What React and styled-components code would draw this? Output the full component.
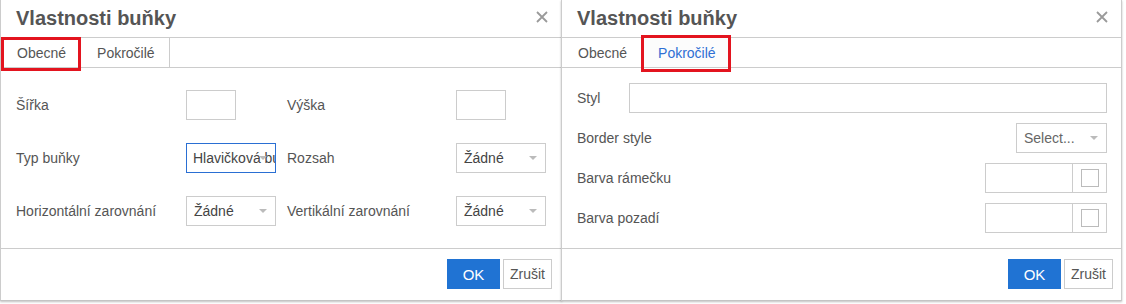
import React from "react";
import styled, { createGlobalStyle } from "styled-components";

const Global = createGlobalStyle`
  html, body { margin: 0; padding: 0; background: #fff; }
  body { font-family: "Liberation Sans", Arial, sans-serif; color: #555; }
  * { box-sizing: border-box; }
`;

const Page = styled.div`
  display: flex;
  width: 1126px;
  height: 304px;
  align-items: flex-start;
`;

const Dialog = styled.div`
  width: ${(p) => p.$w}px;
  margin-left: ${(p) => (p.$overlap ? -1 : 0)}px;
  border-left: 1px solid #ccc;
  border-right: 1px solid #ccc;
  border-bottom: 1px solid #c4c4c4;
  box-shadow: 0 1px 2px rgba(0, 0, 0, 0.25);
  background: #fff;
  display: flex;
  flex-direction: column;
`;

const Header = styled.div`
  height: 38px;
  border-bottom: 1px solid #ccc;
  display: flex;
  align-items: center;
  justify-content: space-between;
  padding: 0 13px 1px 15px;
`;

const Title = styled.h2`
  margin: 0;
  font-size: 20px;
  font-weight: bold;
  color: #555;
  line-height: 37px;
`;

const Close = styled.button`
  border: 0;
  background: none;
  padding: 0;
  width: 12px;
  height: 12px;
  display: flex;
  cursor: pointer;
  margin-top: -2px;
`;

const TabBar = styled.div`
  height: 30px;
  border-bottom: 1px solid #ccc;
  display: flex;
`;

const Tab = styled.div`
  position: relative;
  height: 29px;
  padding: 0 14px 0 16px;
  display: flex;
  align-items: center;
  font-size: 14px;
  color: ${(p) => (p.$active ? "#2f6fd4" : "#555")};
  background: ${(p) => (p.$active ? "#fcfcfc" : "#fff")};
  border-right: 1px solid ${(p) => (p.$bordered ? "#ccc" : "transparent")};
`;

const Mark = styled.span`
  position: absolute;
  left: ${(p) => p.$l}px;
  top: ${(p) => p.$t}px;
  right: ${(p) => p.$r}px;
  bottom: ${(p) => p.$b}px;
  border: 3px solid #e3141f;
  pointer-events: none;
`;

const Body = styled.div`
  height: 181px;
  border-bottom: 1px solid #ccc;
`;

const Grid = styled.div`
  display: grid;
  grid-template-columns: 170px 101px 169px 90px;
  grid-auto-rows: 30px;
  row-gap: 23px;
  align-items: center;
  padding: 22px 0 0 15px;
`;

const Label = styled.label`
  font-size: 14px;
  color: #555;
  width: ${(p) => (p.$w ? `${p.$w}px` : "auto")};
  flex: none;
`;

const TextBox = styled.div`
  width: ${(p) => (p.$w ? `${p.$w}px` : "auto")};
  flex: ${(p) => (p.$grow ? 1 : "none")};
  height: 30px;
  border: 1px solid #ccc;
  background: #fff;
`;

const SelectBox = styled.div`
  position: relative;
  width: ${(p) => p.$w}px;
  height: 30px;
  border: 1px solid ${(p) => (p.$focus ? "#2a6fd3" : "#ccc")};
  background: #fff;
  padding: 0 0 0 ${(p) => (p.$focus ? 6 : 7)}px;
  font-size: 14px;
  color: ${(p) => (p.$muted ? "#666" : "#444")};
  line-height: 28px;
  white-space: nowrap;
  overflow: hidden;
  &::after {
    content: "";
    position: absolute;
    right: 8px;
    top: 12px;
    border-left: 4px solid transparent;
    border-right: 4px solid transparent;
    border-top: 4px solid #bbb;
  }
`;

const Rows = styled.div`
  display: flex;
  flex-direction: column;
  gap: 10px;
  padding: 15px 14px 0 15px;
`;

const Row = styled.div`
  display: flex;
  align-items: center;
  justify-content: space-between;
  height: 30px;
`;

const ColorBox = styled.div`
  width: 122px;
  height: 30px;
  border: 1px solid #ccc;
  display: flex;
`;

const ColorValue = styled.div`
  flex: 1;
  border-right: 1px solid #ccc;
`;

const ColorSwatch = styled.div`
  width: 33px;
  display: flex;
  align-items: center;
  justify-content: center;
  &::before {
    content: "";
    width: 16px;
    height: 16px;
    border: 1px solid #bbb;
  }
`;

const Footer = styled.div`
  height: 51px;
  display: flex;
  justify-content: flex-end;
  align-items: flex-start;
  gap: 3px;
  padding: 10px ${(p) => p.$pr}px 0 0;
`;

const Button = styled.button`
  height: 30px;
  width: ${(p) => p.$w}px;
  font-family: "Liberation Sans", Arial, sans-serif;
  font-size: ${(p) => (p.$primary ? 15 : 14)}px;
  color: ${(p) => (p.$primary ? "#fff" : "#555")};
  background: ${(p) => (p.$primary ? "#2073d3" : "#fff")};
  border: 1px solid ${(p) => (p.$primary ? "#2073d3" : "#ccc")};
  padding: 0;
  cursor: pointer;
`;

const CloseIcon = () => (
  <svg width="12" height="12" viewBox="0 0 12 12">
    <path d="M1 1 L11 11 M11 1 L1 11" stroke="#9a9a9a" strokeWidth="1.8" fill="none" />
  </svg>
);

const DialogHeader = () => (
  <Header>
    <Title>Vlastnosti buňky</Title>
    <Close aria-label="close">
      <CloseIcon />
    </Close>
  </Header>
);

const Actions = ({ pr }) => (
  <Footer $pr={pr}>
    <Button $primary $w={53}>OK</Button>
    <Button $w={49}>Zrušit</Button>
  </Footer>
);

export default function App() {
  return (
    <>
      <Global />
      <Page>
        <Dialog $w={562}>
          <DialogHeader />
          <TabBar>
            <Tab $bordered>
              Obecné
              <Mark $l={0} $t={-1} $r={-1} $b={-4} />
            </Tab>
            <Tab $bordered>Pokročilé</Tab>
          </TabBar>
          <Body>
            <Grid>
              <Label>Šířka</Label>
              <TextBox $w={50} />
              <Label>Výška</Label>
              <TextBox $w={50} />

              <Label>Typ buňky</Label>
              <SelectBox $w={90} $focus>Hlavičková buňka</SelectBox>
              <Label>Rozsah</Label>
              <SelectBox $w={90}>Žádné</SelectBox>

              <Label>Horizontální zarovnání</Label>
              <SelectBox $w={90}>Žádné</SelectBox>
              <Label>Vertikální zarovnání</Label>
              <SelectBox $w={90}>Žádné</SelectBox>
            </Grid>
          </Body>
          <Actions pr={9} />
        </Dialog>

        <Dialog $w={561} $overlap>
          <DialogHeader />
          <TabBar>
            <Tab>Obecné</Tab>
            <Tab $active>
              Pokročilé
              <Mark $l={-1} $t={-3} $r={-1} $b={-5} />
            </Tab>
          </TabBar>
          <Body>
            <Rows>
              <Row>
                <Label $w={52}>Styl</Label>
                <TextBox $grow />
              </Row>
              <Row>
                <Label>Border style</Label>
                <SelectBox $w={91} $muted>Select...</SelectBox>
              </Row>
              <Row>
                <Label>Barva rámečku</Label>
                <ColorBox>
                  <ColorValue />
                  <ColorSwatch />
                </ColorBox>
              </Row>
              <Row>
                <Label>Barva pozadí</Label>
                <ColorBox>
                  <ColorValue />
                  <ColorSwatch />
                </ColorBox>
              </Row>
            </Rows>
          </Body>
          <Actions pr={8} />
        </Dialog>
      </Page>
    </>
  );
}
